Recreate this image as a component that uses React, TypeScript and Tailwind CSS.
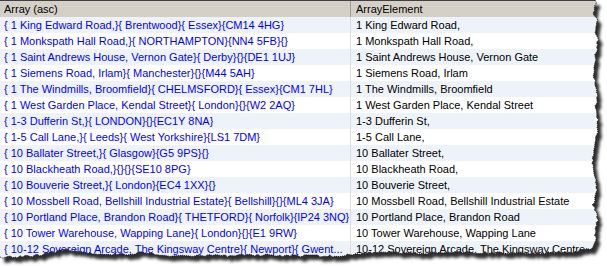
import React from "react";

const rows: [string, string][] = [
  ["{ 1 King Edward Road,}{ Brentwood}{ Essex}{CM14 4HG}", "1 King Edward Road,"],
  ["{ 1 Monkspath Hall Road,}{ NORTHAMPTON}{NN4 5FB}{}", "1 Monkspath Hall Road,"],
  ["{ 1 Saint Andrews House, Vernon Gate}{ Derby}{}{DE1 1UJ}", "1 Saint Andrews House, Vernon Gate"],
  ["{ 1 Siemens Road, Irlam}{ Manchester}{}{M44 5AH}", "1 Siemens Road, Irlam"],
  ["{ 1 The Windmills, Broomfield}{ CHELMSFORD}{ Essex}{CM1 7HL}", "1 The Windmills, Broomfield"],
  ["{ 1 West Garden Place, Kendal Street}{ London}{}{W2 2AQ}", "1 West Garden Place, Kendal Street"],
  ["{ 1-3 Dufferin St,}{ LONDON}{}{EC1Y 8NA}", "1-3 Dufferin St,"],
  ["{ 1-5 Call Lane,}{ Leeds}{ West Yorkshire}{LS1 7DM}", "1-5 Call Lane,"],
  ["{ 10 Ballater Street,}{ Glasgow}{G5 9PS}{}", "10 Ballater Street,"],
  ["{ 10 Blackheath Road,}{}{}{SE10 8PG}", "10 Blackheath Road,"],
  ["{ 10 Bouverie Street,}{ London}{EC4 1XX}{}", "10 Bouverie Street,"],
  ["{ 10 Mossbell Road, Bellshill Industrial Estate}{ Bellshill}{}{ML4 3JA}", "10 Mossbell Road, Bellshill Industrial Estate"],
  ["{ 10 Portland Place, Brandon Road}{ THETFORD}{ Norfolk}{IP24 3NQ}", "10 Portland Place, Brandon Road"],
  ["{ 10 Tower Warehouse, Wapping Lane}{ London}{}{E1 9RW}", "10 Tower Warehouse, Wapping Lane"],
  ["{ 10-12 Sovereign Arcade, The Kingsway Centre}{ Newport}{ Gwent...", "10-12 Sovereign Arcade, The Kingsway Centre"],
];

// torn paper edge: coarse points, filled in with small jitter
const rightPts: [number, number][] = [
  [596, 0], [595, 8], [593, 13], [597, 20], [595, 30], [598, 40], [596, 52], [593, 73],
  [597, 90], [596, 108], [598, 122], [596, 140], [592, 163], [597, 190], [593, 205],
  [598, 215], [596, 228], [595, 240], [591, 249],
];
const bottomPts: [number, number][] = [
  [575, 252], [540, 253], [500, 253], [460, 252], [420, 253], [380, 252], [350, 255],
  [330, 256], [300, 256], [260, 255], [215, 256], [200, 255], [170, 256], [145, 252],
  [130, 254], [100, 254], [80, 252], [65, 249], [55, 252], [40, 255], [20, 257], [0, 257],
];

function tornPath() {
  let seed = 7;
  const rnd = () => {
    seed = (seed * 16807) % 2147483647;
    return seed / 2147483647 - 0.5;
  };
  const all = [...rightPts, ...bottomPts];
  const out: string[] = [];
  for (let i = 0; i < all.length - 1; i++) {
    const [x1, y1] = all[i];
    const [x2, y2] = all[i + 1];
    const len = Math.hypot(x2 - x1, y2 - y1);
    const steps = Math.max(1, Math.round(len / 2.5));
    for (let s = 0; s < steps; s++) {
      const t = s / steps;
      const vertical = Math.abs(y2 - y1) > Math.abs(x2 - x1);
      const j = rnd() * 2.4;
      const x = x1 + (x2 - x1) * t + (vertical ? j : 0);
      const y = y1 + (y2 - y1) * t + (vertical ? 0 : j);
      out.push(`${x.toFixed(1)} ${y.toFixed(1)}`);
    }
  }
  out.push(`${all[all.length - 1][0]} ${all[all.length - 1][1]}`);
  return out;
}

function TornEdge() {
  const pts = tornPath();
  const edge = "M" + pts.join(" L");
  const paper = `M0 0 L${edge.slice(1)} L0 0 Z`;
  return (
    <svg className="pointer-events-none absolute left-0 top-0" width={607} height={266}>
      <defs>
        <filter id="sh" x="-10%" y="-10%" width="120%" height="120%">
          <feGaussianBlur stdDeviation="1.7" />
        </filter>
        <clipPath id="outside">
          <path clipRule="evenodd" d={`M0 0 H607 V266 H0 Z ${paper}`} />
        </clipPath>
      </defs>
      <path fillRule="evenodd" fill="#ffffff" d={`M0 0 H607 V266 H0 Z ${paper}`} />
      <g clipPath="url(#outside)">
        <path d={paper} fill="#2e2e2e" transform="translate(4 5)" filter="url(#sh)" />
      </g>
      <path d={edge} fill="none" stroke="#111111" strokeWidth={1} strokeDasharray="1 1" />
    </svg>
  );
}

export default function App() {
  return (
    <div
      className="relative h-[266px] w-[607px] overflow-hidden bg-white text-[11px] leading-none"
      style={{ fontFamily: '"Liberation Sans", Arial, sans-serif' }}
    >
      <div className="w-[596px] border-t border-[#404040]">
        <div className="flex h-[16px] bg-[#d4d0c8] text-black">
          <div className="flex w-[351px] items-center border-r border-[#a09c94] pl-[4px]">Array (asc)</div>
          <div className="flex flex-1 items-center pl-[5px]">ArrayElement</div>
        </div>
        {rows.map(([a, b], i) => (
          <div key={i} className={`flex h-[16px] ${i % 2 === 0 ? "bg-[#eef3fa]" : "bg-white"}`}>
            <div className="flex w-[351px] items-center overflow-hidden whitespace-nowrap border-r border-[#dcdcdc] pl-[4px] text-[#0000ff]">
              <span className="truncate">{a}</span>
            </div>
            <div className="flex flex-1 items-center overflow-hidden whitespace-nowrap pl-[5px] text-black">{b}</div>
          </div>
        ))}
      </div>
      <TornEdge />
    </div>
  );
}
